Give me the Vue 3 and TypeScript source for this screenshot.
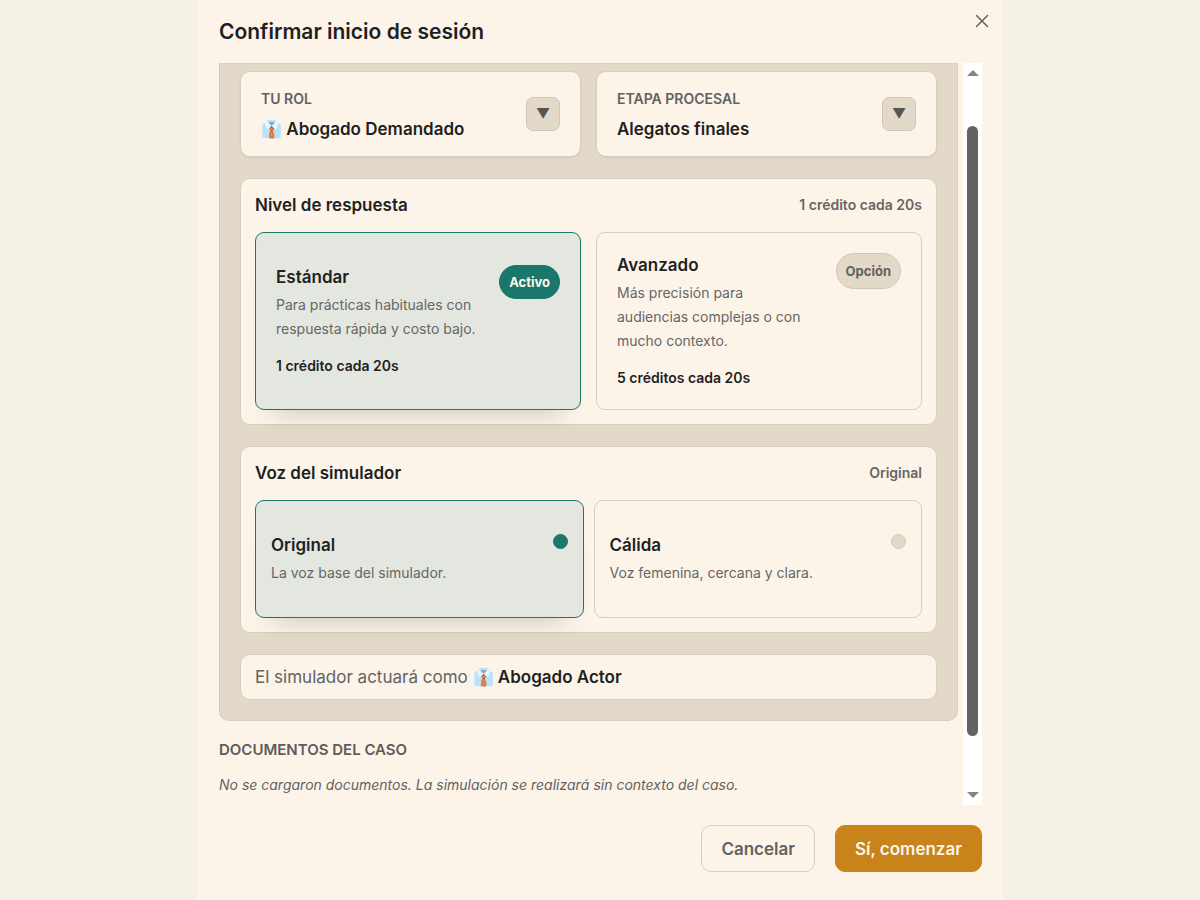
<script setup lang="ts">
import { ref, computed } from 'vue'

interface Level {
  id: string
  name: string
  description: string
  price: string
}

interface Voice {
  id: string
  name: string
  description: string
}

const roles = ['👔 Abogado Demandado', '👔 Abogado Actor']
const stages = ['Alegatos finales']

const levels: Level[] = [
  {
    id: 'standard',
    name: 'Estándar',
    description: 'Para prácticas habituales con respuesta rápida y costo bajo.',
    price: '1 crédito cada 20s',
  },
  {
    id: 'advanced',
    name: 'Avanzado',
    description: 'Más precisión para audiencias complejas o con mucho contexto.',
    price: '5 créditos cada 20s',
  },
]

const voices: Voice[] = [
  { id: 'original', name: 'Original', description: 'La voz base del simulador.' },
  { id: 'warm', name: 'Cálida', description: 'Voz femenina, cercana y clara.' },
]

const role = ref(roles[0])
const stage = ref(stages[0])
const level = ref('standard')
const voice = ref('original')

const levelPrice = computed(() => levels.find((l) => l.id === level.value)?.price)
const voiceName = computed(() => voices.find((v) => v.id === voice.value)?.name)
const opponent = computed(() => roles.find((r) => r !== role.value))
</script>

<template>
  <div class="backdrop">
    <main class="modal" role="dialog" aria-labelledby="dialog-title">
      <button class="close" type="button" aria-label="Cerrar">
        <svg viewBox="0 0 14 14" width="14" height="14" aria-hidden="true">
          <path d="M1.5 1.5 12.5 12.5M12.5 1.5 1.5 12.5" />
        </svg>
      </button>
      <h1 id="dialog-title">Confirmar inicio de sesión</h1>

      <div class="body">
        <div class="content">
          <div class="panel">
            <div class="selectors">
              <label class="card selector">
                <span class="selector-text">
                  <span class="selector-label">TU ROL</span>
                  <select v-model="role">
                    <option v-for="r in roles" :key="r">{{ r }}</option>
                  </select>
                </span>
                <span class="caret" aria-hidden="true">▼</span>
              </label>
              <label class="card selector">
                <span class="selector-text">
                  <span class="selector-label">ETAPA PROCESAL</span>
                  <select v-model="stage">
                    <option v-for="s in stages" :key="s">{{ s }}</option>
                  </select>
                </span>
                <span class="caret" aria-hidden="true">▼</span>
              </label>
            </div>

            <section class="card">
              <header class="section-head">
                <h2>Nivel de respuesta</h2>
                <span class="current">{{ levelPrice }}</span>
              </header>
              <div class="options levels">
                <label
                  v-for="l in levels"
                  :key="l.id"
                  class="option"
                  :class="{ selected: l.id === level }"
                >
                  <input v-model="level" class="hidden-radio" type="radio" name="level" :value="l.id" />
                  <span class="option-row">
                    <span class="option-text">
                      <strong>{{ l.name }}</strong>
                      <span class="description">{{ l.description }}</span>
                    </span>
                    <span class="badge">{{ l.id === level ? 'Activo' : 'Opción' }}</span>
                  </span>
                  <span class="price">{{ l.price }}</span>
                </label>
              </div>
            </section>

            <section class="card">
              <header class="section-head">
                <h2>Voz del simulador</h2>
                <span class="current">{{ voiceName }}</span>
              </header>
              <div class="options voices">
                <label
                  v-for="v in voices"
                  :key="v.id"
                  class="option"
                  :class="{ selected: v.id === voice }"
                >
                  <input v-model="voice" class="hidden-radio" type="radio" name="voice" :value="v.id" />
                  <span class="option-row">
                    <span class="option-text">
                      <strong>{{ v.name }}</strong>
                      <span class="description">{{ v.description }}</span>
                    </span>
                    <span class="dot"></span>
                  </span>
                </label>
              </div>
            </section>

            <p class="card summary">
              El simulador actuará como <strong>{{ opponent }}</strong>
            </p>
          </div>

          <h3>DOCUMENTOS DEL CASO</h3>
          <p class="empty">
            No se cargaron documentos. La simulación se realizará sin contexto del caso.
          </p>
        </div>

        <div class="scrollbar" aria-hidden="true">
          <svg viewBox="0 0 12 6" width="12" height="6"><path d="M0 6 6 0 12 6Z" /></svg>
          <span class="track"><span class="thumb"></span></span>
          <svg viewBox="0 0 12 6" width="12" height="6"><path d="M0 0 6 6 12 0Z" /></svg>
        </div>
      </div>

      <footer>
        <button class="btn cancel" type="button">Cancelar</button>
        <button class="btn confirm" type="button">Sí, comenzar</button>
      </footer>
    </main>
  </div>
</template>

<style>
body {
  margin: 0;
  background: #f5f0e4;
}
</style>

<style scoped>
.backdrop {
  display: flex;
  justify-content: center;
  min-height: 100vh;
  background: #f5f0e4;
  color: #1f1f1f;
  font-family: Inter, "Liberation Sans", sans-serif;
  font-size: 17px;
  line-height: 24px;
}

.backdrop * {
  box-sizing: border-box;
}

.modal {
  position: relative;
  display: flex;
  flex-direction: column;
  width: 100%;
  max-width: 806px;
  padding: 16px 21px 28px 22px;
  box-sizing: border-box;
  background: #fcf4e9;
}

h1,
h2,
h3,
p {
  margin: 0;
}

h1 {
  font-size: 21px;
  line-height: 32px;
  font-weight: 600;
}

.close {
  position: absolute;
  top: 9px;
  right: 9px;
  display: grid;
  place-items: center;
  width: 24px;
  height: 24px;
  padding: 0;
  border: 0;
  background: none;
  cursor: pointer;
}

.close path {
  fill: none;
  stroke: #626262;
  stroke-width: 1.5;
  stroke-linecap: round;
}

.body {
  display: flex;
  flex: 1;
  gap: 5px;
  margin-top: 15px;
}

.content {
  flex: 1;
  min-width: 0;
}

.panel {
  display: flex;
  flex-direction: column;
  gap: 21px;
  padding: 7px 20px 20px;
  border: 1px solid #d6cdbd;
  border-top-color: #dcd3c3;
  border-radius: 0 0 10px 10px;
  background: #e3d9c8;
}

.card {
  padding: 14px;
  border: 1px solid #d6cebf;
  border-radius: 10px;
  background: #fcf4e9;
}

.selectors {
  display: grid;
  grid-template-columns: 1fr 1fr;
  gap: 15px;
}

.selector {
  display: flex;
  align-items: center;
  gap: 16px;
  min-height: 86px;
  padding: 14px 20px 15px;
  box-shadow: 0 1px 2px rgba(60, 50, 30, 0.08);
  cursor: pointer;
}

.selector-text {
  display: flex;
  flex: 1;
  flex-direction: column;
  gap: 6px;
  min-width: 0;
}

.selector-label {
  color: #626262;
  font-size: 14px;
  font-weight: 600;
}

select {
  appearance: none;
  width: 100%;
  height: 24px;
  padding: 0;
  border: 0;
  background: none;
  color: #1f1f1f;
  font: inherit;
  font-weight: 600;
  cursor: pointer;
}

.caret {
  display: grid;
  place-items: center;
  width: 34px;
  height: 34px;
  border: 1px solid #d0c7b7;
  border-radius: 7px;
  background: #e3d9c8;
  color: #555;
  font-size: 14px;
}

.section-head {
  display: flex;
  justify-content: space-between;
  gap: 16px;
  margin-bottom: 15px;
}

h2,
strong {
  font-size: 17px;
  line-height: 24px;
  font-weight: 600;
}

.current {
  color: #666;
  font-size: 14px;
  font-weight: 600;
}

.options {
  display: grid;
  grid-template-columns: 1fr 1fr;
}

.levels {
  gap: 15px;
}

.voices {
  gap: 10px;
}

.option {
  display: flex;
  flex-direction: column;
  justify-content: center;
  gap: 13px;
  padding: 20px 20px 19px;
  border: 1px solid #d6cebf;
  border-radius: 9px;
  cursor: pointer;
}

.voices .option {
  min-height: 118px;
  padding: 15px;
}

.option.selected {
  border-color: #1b776c;
  background: #e4e7e0;
  box-shadow: 0 20px 24px -20px rgba(60, 60, 50, 0.3);
}

.hidden-radio {
  position: absolute;
  width: 1px;
  height: 1px;
  margin: 0;
  opacity: 0;
  pointer-events: none;
}

.option-row {
  display: flex;
  align-items: flex-start;
  justify-content: space-between;
  gap: 16px;
}

.option-text {
  display: flex;
  flex-direction: column;
  gap: 4px;
}

.levels .option-text {
  max-width: 200px;
}

.description {
  color: #666;
  font-size: 14px;
}

.price {
  font-size: 14px;
  font-weight: 600;
}

.badge {
  padding: 5px 9px;
  border: 1px solid #d0c7b7;
  border-radius: 18px;
  background: #e3d9c8;
  color: #626262;
  font-size: 13px;
  font-weight: 700;
}

.selected .badge {
  padding: 4px 9px;
  border-color: #1b776c;
  background: #1b776c;
  color: #fcf4e9;
}

.dot {
  width: 15px;
  height: 15px;
  margin-top: 1px;
  border: 1px solid #d0c7b7;
  border-radius: 50%;
  background: #e3d9c8;
}

.selected .dot {
  border-color: #1b776c;
  background: #1b776c;
}

.summary {
  padding: 10px 14px;
  color: #626262;
}

.summary strong {
  color: #1f1f1f;
}

h3 {
  margin-top: 17px;
  color: #5c5c5c;
  font-size: 15px;
  line-height: 24px;
  font-weight: 600;
}

.empty {
  margin-top: 11px;
  color: #626262;
  font-size: 14px;
  font-style: italic;
}

.scrollbar {
  display: flex;
  flex-direction: column;
  align-items: center;
  width: 19px;
  padding: 7px 0;
  background: #fff;
}

.scrollbar path {
  fill: #858585;
}

.track {
  display: flex;
  flex: 1;
  padding: 50px 0 56px;
}

.thumb {
  width: 11px;
  border-radius: 6px;
  background: #636363;
}

footer {
  display: flex;
  justify-content: flex-end;
  gap: 20px;
  margin-top: 20px;
}

.btn {
  height: 47px;
  padding: 0 19px;
  border: 1px solid #d6cebf;
  border-radius: 10px;
  background: #fcf4e9;
  color: #626262;
  font: inherit;
  font-weight: 600;
  cursor: pointer;
}

.confirm {
  border-color: #c8841a;
  background: #c8841a;
  color: #fcf4e9;
}
</style>
